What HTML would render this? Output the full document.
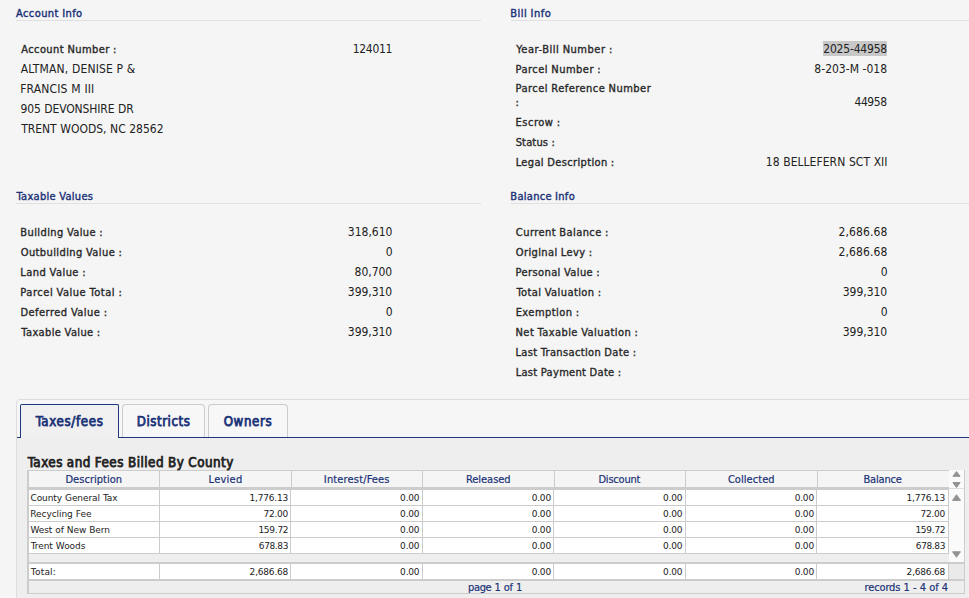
<!DOCTYPE html>
<html lang="en">
<head>
<meta charset="utf-8">
<title>Bill Detail</title>
<style>
html,body{margin:0;padding:0;}
body{width:969px;height:598px;overflow:hidden;background:#f5f5f5;position:relative;font-family:"Liberation Sans",sans-serif;color:#222;}
.t{position:absolute;white-space:pre;}
.v,.l,.h,.k{font-family:"DejaVu Sans Condensed","Liberation Sans",sans-serif;}
.v{font-size:12px;line-height:14px;}
.l{font-size:11px;line-height:13px;color:#282828;-webkit-text-stroke:0.35px #282828;}
.l.g{color:#1b3377;-webkit-text-stroke:0.4px #1b3377;}
.h{font-size:11px;line-height:13px;color:#1b3377;-webkit-text-stroke:0.2px #1b3377;}
.c{font-family:"DejaVu Sans","Liberation Sans",sans-serif;font-size:9px;line-height:10px;}
.k{font-size:13.2px;line-height:15px;-webkit-text-stroke:0.75px #222;}
.k2{font-size:13.33px;}
.k.g{color:#1b3377;-webkit-text-stroke-color:#1b3377;}
.box{position:absolute;}
.hl{background:#c8c8c8;}
.rule{position:absolute;height:1px;background:#e0e0e0;}
.tab{position:absolute;top:404px;height:33px;box-sizing:border-box;border:1px solid #ccc;border-bottom:none;border-radius:4px 4px 0 0;background:#f7f7f7;}
.tab.on{border-color:#1c3680;border-radius:2px 2px 0 0;background:#f0f0f0;height:34px;}
.cell{position:absolute;background:#fff;}
.vs{position:absolute;width:1px;background:#ccc;}
</style>
</head>
<body>
<!-- fieldset rules -->
<div class="rule" style="left:16px;top:20px;width:465px"></div>
<div class="rule" style="left:511px;top:20px;width:458px"></div>
<div class="rule" style="left:16px;top:203px;width:465px"></div>
<div class="rule" style="left:511px;top:203px;width:458px"></div>
<!-- highlight -->
<div class="box hl" style="left:823px;top:41px;width:64px;height:15px"></div>

<!-- tab panel -->
<div class="box" style="left:16px;top:399px;width:960px;height:210px;border:1px solid #ddd;border-radius:4px;background:#f6f6f6;box-sizing:border-box"></div>
<div class="box" style="left:17px;top:438px;width:952px;height:160px;background:#eee"></div>
<div class="box" style="left:17px;top:437px;width:952px;height:1px;background:#1c3680"></div>
<div class="tab on" style="left:20px;width:99px"></div>
<div class="tab" style="left:122px;width:83px"></div>
<div class="tab" style="left:208px;width:80px"></div>

<!-- grid -->
<div class="box" id="grid" style="left:27px;top:470px;width:938px;height:124px;background:#ccc"></div>
<!-- header cells -->
<div class="box" style="left:29px;top:471px;width:920px;height:16px;background:#f5f5f5"></div>
<div class="box" style="left:949px;top:470px;width:15px;height:18px;background:#fafafa"></div>
<!-- data rows -->
<div class="cell" style="left:29px;top:490px;width:920px;height:15px"></div>
<div class="cell" style="left:29px;top:506px;width:920px;height:15px"></div>
<div class="cell" style="left:29px;top:522px;width:920px;height:15px"></div>
<div class="cell" style="left:29px;top:538px;width:920px;height:15px"></div>
<div class="box" style="left:949px;top:489px;width:15px;height:73px;background:#fafafa"></div>
<!-- spacer band -->
<div class="box" style="left:29px;top:554px;width:920px;height:8px;background:#eee"></div>
<!-- total row -->
<div class="cell" style="left:29px;top:564px;width:920px;height:15px"></div>
<div class="box" style="left:949px;top:564px;width:15px;height:15px;background:#eaeaea"></div>
<!-- footer -->
<div class="box" style="left:29px;top:581px;width:935px;height:12px;background:#eee"></div>
<!-- column separators -->
<div class="vs" style="left:159px;top:471px;height:16px"></div>
<div class="vs" style="left:291px;top:471px;height:16px"></div>
<div class="vs" style="left:422px;top:471px;height:16px"></div>
<div class="vs" style="left:554px;top:471px;height:16px"></div>
<div class="vs" style="left:685px;top:471px;height:16px"></div>
<div class="vs" style="left:817px;top:471px;height:16px"></div>
<div class="vs" style="left:159px;top:490px;height:63px"></div>
<div class="vs" style="left:290px;top:490px;height:63px"></div>
<div class="vs" style="left:422px;top:490px;height:63px"></div>
<div class="vs" style="left:553px;top:490px;height:63px"></div>
<div class="vs" style="left:685px;top:490px;height:63px"></div>
<div class="vs" style="left:816px;top:490px;height:63px"></div>
<div class="vs" style="left:159px;top:564px;height:15px"></div>
<div class="vs" style="left:290px;top:564px;height:15px"></div>
<div class="vs" style="left:422px;top:564px;height:15px"></div>
<div class="vs" style="left:553px;top:564px;height:15px"></div>
<div class="vs" style="left:685px;top:564px;height:15px"></div>
<div class="vs" style="left:816px;top:564px;height:15px"></div>
<div class="vs" style="left:948px;top:490px;height:63px"></div>
<div class="vs" style="left:948px;top:564px;height:15px"></div>
<div class="box" style="left:949px;top:488px;width:15px;height:1px;background:#ddd"></div>
<!-- scroll arrows -->
<svg class="box" style="left:949px;top:470px" width="15" height="92" viewBox="0 0 15 92">
<g fill="#929292" stroke="#929292" stroke-width="1" stroke-linejoin="round">
<path d="M3.9 6.3 L7.5 1.6 L11.1 6.3 Z"/>
<path d="M3.9 12.6 L7.5 17.5 L11.1 12.6 Z"/>
<path d="M3.5 30.4 L7.5 24.8 L11.5 30.4 Z"/>
<path d="M3.6 81.8 L7.5 87.2 L11.4 81.8 Z"/>
</g>
</svg>
<span class="t l g" style="left:15.91px;top:7px;letter-spacing:0.429px;word-spacing:-0.264px">Account Info</span>
<span class="t l g" style="left:510.31px;top:7px;letter-spacing:0.477px;word-spacing:-0.312px">Bill Info</span>
<span class="t l g" style="left:16.61px;top:190px;letter-spacing:0.286px;word-spacing:-0.121px">Taxable Values</span>
<span class="t l g" style="left:510.33px;top:190px;letter-spacing:0.285px;word-spacing:-0.120px">Balance Info</span>
<span class="t l" style="left:21.14px;top:43px;letter-spacing:0.432px;word-spacing:-0.267px">Account Number :</span>
<span class="t v" style="left:352.77px;top:42px;letter-spacing:-0.328px">124011</span>
<span class="t v" style="left:20.80px;top:62px;letter-spacing:0.149px;word-spacing:0.031px">ALTMAN, DENISE P &amp;</span>
<span class="t v" style="left:20.13px;top:82px;letter-spacing:0.182px">FRANCIS M III</span>
<span class="t v" style="left:20.39px;top:102px;letter-spacing:-0.115px;word-spacing:0.295px">905 DEVONSHIRE DR</span>
<span class="t v" style="left:21.13px;top:122px;letter-spacing:-0.011px;word-spacing:0.191px">TRENT WOODS, NC 28562</span>
<span class="t l" style="left:516.20px;top:43px;letter-spacing:0.535px;word-spacing:-0.370px">Year-Bill Number :</span>
<span class="t l" style="left:515.56px;top:63px;letter-spacing:0.476px;word-spacing:-0.311px">Parcel Number :</span>
<span class="t l" style="left:515.51px;top:82px;letter-spacing:0.471px;word-spacing:-0.306px">Parcel Reference Number</span>
<span class="t l" style="left:515.55px;top:96px;letter-spacing:0.000px">:</span>
<span class="t l" style="left:515.56px;top:116px;letter-spacing:0.518px;word-spacing:-0.353px">Escrow :</span>
<span class="t l" style="left:515.70px;top:136px;letter-spacing:0.153px;word-spacing:0.012px">Status :</span>
<span class="t l" style="left:515.63px;top:156px;letter-spacing:0.360px;word-spacing:-0.195px">Legal Description :</span>
<span class="t v" style="left:823.28px;top:42px;letter-spacing:-0.195px">2025-44958</span>
<span class="t v" style="left:814.36px;top:62px;letter-spacing:0.002px;word-spacing:0.178px">8-203-M -018</span>
<span class="t v" style="left:854.55px;top:95px;letter-spacing:-0.454px">44958</span>
<span class="t v" style="left:765.75px;top:155px;letter-spacing:0.047px;word-spacing:0.133px">18 BELLEFERN SCT XII</span>
<span class="t l" style="left:20.34px;top:226px;letter-spacing:0.394px;word-spacing:-0.229px">Building Value :</span>
<span class="t v" style="left:347.86px;top:225px;letter-spacing:-0.018px">318,610</span>
<span class="t l" style="left:20.69px;top:246px;letter-spacing:0.405px;word-spacing:-0.240px">Outbuilding Value :</span>
<span class="t v" style="left:385.78px;top:245px;letter-spacing:0.000px">0</span>
<span class="t l" style="left:20.36px;top:266px;letter-spacing:0.446px;word-spacing:-0.281px">Land Value :</span>
<span class="t v" style="left:354.62px;top:265px;letter-spacing:-0.036px">80,700</span>
<span class="t l" style="left:20.37px;top:286px;letter-spacing:0.529px;word-spacing:-0.364px">Parcel Value Total :</span>
<span class="t v" style="left:347.86px;top:285px;letter-spacing:-0.049px">399,310</span>
<span class="t l" style="left:20.42px;top:306px;letter-spacing:0.481px;word-spacing:-0.316px">Deferred Value :</span>
<span class="t v" style="left:385.78px;top:305px;letter-spacing:0.000px">0</span>
<span class="t l" style="left:21.35px;top:326px;letter-spacing:0.373px;word-spacing:-0.208px">Taxable Value :</span>
<span class="t v" style="left:347.86px;top:325px;letter-spacing:-0.049px">399,310</span>
<span class="t l" style="left:515.87px;top:226px;letter-spacing:0.428px;word-spacing:-0.263px">Current Balance :</span>
<span class="t v" style="left:838.52px;top:225px;letter-spacing:0.117px">2,686.68</span>
<span class="t l" style="left:515.83px;top:246px;letter-spacing:0.370px;word-spacing:-0.205px">Original Levy :</span>
<span class="t v" style="left:838.52px;top:245px;letter-spacing:0.117px">2,686.68</span>
<span class="t l" style="left:515.60px;top:266px;letter-spacing:0.387px;word-spacing:-0.222px">Personal Value :</span>
<span class="t v" style="left:880.78px;top:265px;letter-spacing:0.000px">0</span>
<span class="t l" style="left:516.48px;top:286px;letter-spacing:0.412px;word-spacing:-0.247px">Total Valuation :</span>
<span class="t v" style="left:842.81px;top:285px;letter-spacing:-0.041px">399,310</span>
<span class="t l" style="left:515.64px;top:306px;letter-spacing:0.464px;word-spacing:-0.299px">Exemption :</span>
<span class="t v" style="left:880.78px;top:305px;letter-spacing:0.000px">0</span>
<span class="t l" style="left:515.54px;top:326px;letter-spacing:0.434px;word-spacing:-0.269px">Net Taxable Valuation :</span>
<span class="t v" style="left:842.81px;top:325px;letter-spacing:-0.041px">399,310</span>
<span class="t l" style="left:515.43px;top:346px;letter-spacing:0.350px;word-spacing:-0.185px">Last Transaction Date :</span>
<span class="t l" style="left:515.63px;top:366px;letter-spacing:0.316px;word-spacing:-0.151px">Last Payment Date :</span>
<span class="t k g" style="left:35.66px;top:414px;letter-spacing:0.658px">Taxes/fees</span>
<span class="t k g" style="left:136.81px;top:414px;letter-spacing:0.535px">Districts</span>
<span class="t k g" style="left:223.63px;top:414px;letter-spacing:0.623px">Owners</span>
<span class="t k k2" style="left:27.72px;top:455px;letter-spacing:0.474px;word-spacing:-0.274px">Taxes and Fees Billed By County</span>
<span class="t h" style="left:65.47px;top:473px;letter-spacing:0.029px">Description</span>
<span class="t h" style="left:208.61px;top:473px;letter-spacing:0.236px">Levied</span>
<span class="t h" style="left:323.86px;top:473px;letter-spacing:0.148px">Interest/Fees</span>
<span class="t h" style="left:465.88px;top:473px;letter-spacing:-0.021px">Released</span>
<span class="t h" style="left:598.46px;top:473px;letter-spacing:-0.206px">Discount</span>
<span class="t h" style="left:727.88px;top:473px;letter-spacing:0.059px">Collected</span>
<span class="t h" style="left:863.52px;top:473px;letter-spacing:-0.187px">Balance</span>
<span class="t c" style="left:30.44px;top:493px;letter-spacing:-0.088px;word-spacing:0.268px">County General Tax</span>
<span class="t c" style="left:249.39px;top:493px;letter-spacing:-0.161px">1,776.13</span>
<span class="t c" style="left:400.09px;top:493px;letter-spacing:-0.177px">0.00</span>
<span class="t c" style="left:531.66px;top:493px;letter-spacing:-0.198px">0.00</span>
<span class="t c" style="left:663.09px;top:493px;letter-spacing:-0.177px">0.00</span>
<span class="t c" style="left:794.66px;top:493px;letter-spacing:-0.198px">0.00</span>
<span class="t c" style="left:906.39px;top:493px;letter-spacing:-0.161px">1,776.13</span>
<span class="t c" style="left:30.25px;top:509px;letter-spacing:-0.057px;word-spacing:0.237px">Recycling Fee</span>
<span class="t c" style="left:263.54px;top:509px;letter-spacing:-0.286px">72.00</span>
<span class="t c" style="left:400.09px;top:509px;letter-spacing:-0.177px">0.00</span>
<span class="t c" style="left:531.66px;top:509px;letter-spacing:-0.198px">0.00</span>
<span class="t c" style="left:663.09px;top:509px;letter-spacing:-0.177px">0.00</span>
<span class="t c" style="left:794.66px;top:509px;letter-spacing:-0.198px">0.00</span>
<span class="t c" style="left:920.54px;top:509px;letter-spacing:-0.286px">72.00</span>
<span class="t c" style="left:30.41px;top:525px;letter-spacing:-0.079px;word-spacing:0.259px">West of New Bern</span>
<span class="t c" style="left:258.39px;top:525px;letter-spacing:-0.259px">159.72</span>
<span class="t c" style="left:400.09px;top:525px;letter-spacing:-0.177px">0.00</span>
<span class="t c" style="left:531.66px;top:525px;letter-spacing:-0.198px">0.00</span>
<span class="t c" style="left:663.09px;top:525px;letter-spacing:-0.177px">0.00</span>
<span class="t c" style="left:794.66px;top:525px;letter-spacing:-0.198px">0.00</span>
<span class="t c" style="left:915.39px;top:525px;letter-spacing:-0.259px">159.72</span>
<span class="t c" style="left:30.79px;top:541px;letter-spacing:-0.082px;word-spacing:0.262px">Trent Woods</span>
<span class="t c" style="left:258.84px;top:541px;letter-spacing:-0.391px">678.83</span>
<span class="t c" style="left:400.09px;top:541px;letter-spacing:-0.177px">0.00</span>
<span class="t c" style="left:531.66px;top:541px;letter-spacing:-0.198px">0.00</span>
<span class="t c" style="left:663.09px;top:541px;letter-spacing:-0.177px">0.00</span>
<span class="t c" style="left:794.66px;top:541px;letter-spacing:-0.198px">0.00</span>
<span class="t c" style="left:915.84px;top:541px;letter-spacing:-0.391px">678.83</span>
<span class="t c" style="left:30.84px;top:567px;letter-spacing:0.194px">Total:</span>
<span class="t c" style="left:249.61px;top:567px;letter-spacing:-0.197px">2,686.68</span>
<span class="t c" style="left:400.09px;top:567px;letter-spacing:-0.177px">0.00</span>
<span class="t c" style="left:531.66px;top:567px;letter-spacing:-0.198px">0.00</span>
<span class="t c" style="left:663.09px;top:567px;letter-spacing:-0.177px">0.00</span>
<span class="t c" style="left:794.66px;top:567px;letter-spacing:-0.198px">0.00</span>
<span class="t c" style="left:906.61px;top:567px;letter-spacing:-0.197px">2,686.68</span>
<span class="t h" style="left:468.11px;top:581px;letter-spacing:-0.386px;word-spacing:0.551px">page 1 of 1</span>
<span class="t h" style="left:864.53px;top:581px;letter-spacing:-0.136px;word-spacing:0.301px">records 1 - 4 of 4</span>
</body>
</html>
